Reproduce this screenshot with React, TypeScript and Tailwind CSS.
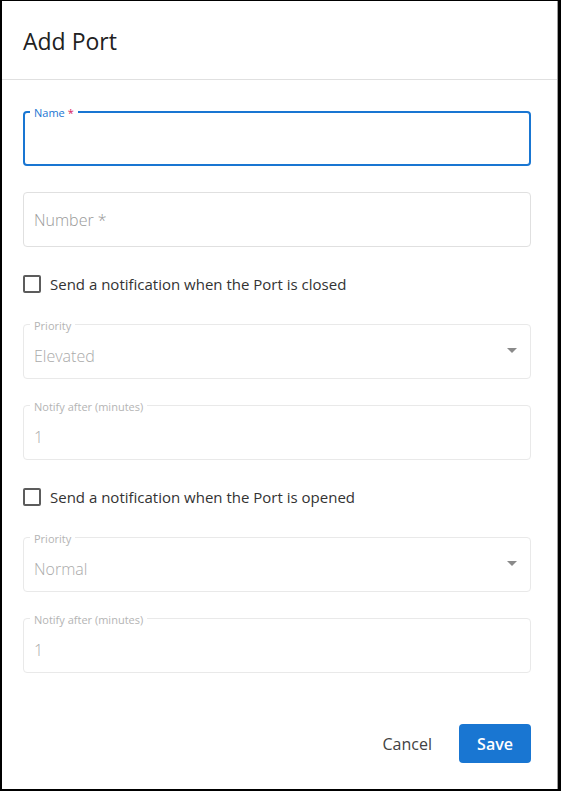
import React from "react";

type FieldProps = {
  label?: string;
  value?: string;
  select?: boolean;
};

// Champ désactivé avec libellé posé sur la bordure (style "outlined").
function DisabledField({ label, value, select }: FieldProps) {
  return (
    <div className="relative h-[55px] rounded-[4px] border border-[#e9e9e9]">
      <span className="absolute left-[6px] top-[-6px] bg-white px-[4px] text-[11px] leading-[14px] text-[#b4b4b4]">
        {label}
      </span>
      <div className="pl-[10px] pt-[19px] text-[16px] font-light leading-[24px] text-[#aaaaaa]">{value}</div>
      {select && (
        <svg
          className="absolute right-[13px] top-[23px]"
          width="10"
          height="5"
          viewBox="0 0 10 5"
          aria-hidden
        >
          <polygon points="0,0 10,0 5,5" fill="#8a8a8a" />
        </svg>
      )}
    </div>
  );
}

function CheckRow({ text }: { text: string }) {
  return (
    <label className="flex h-[18px] items-center gap-[9px]">
      <span className="h-[18px] w-[18px] rounded-[2px] border-2 border-[#5c5c5c] bg-white" />
      <span className="text-[15px] font-medium leading-[18px] text-[#333333]">{text}</span>
    </label>
  );
}

export default function App() {
  return (
    <div className="h-[791px] w-[561px] bg-black pb-[2px] pl-[2px] pr-[3px] pt-[1px]">
      <div className="flex h-[788px] flex-col border-r border-[#9e9e9e] bg-white font-['Open_Sans',sans-serif]">
        <header className="h-[79px] border-b border-[#e0e0e0] pl-[21px] pt-[24px]">
          <h1 className="text-[23px] leading-[32px] text-[#212121]">Add Port</h1>
        </header>

        <div className="ml-[21px] w-[508px]">
          {/* Name : champ actif */}
          <div className="relative mt-[31px] h-[55px] rounded-[4px] border-2 border-[#1976d2]">
            <span className="absolute left-[5px] top-[-7px] bg-white px-[4px] text-[11px] leading-[14px] text-[#1976d2]">
              Name <span className="text-[#d81b60]">*</span>
            </span>
          </div>

          <div className="mt-[26px] flex h-[55px] items-center rounded-[4px] border border-[#e0e0e0] pl-[10px] text-[16px] font-light leading-[24px] text-[#999999]">
            Number *
          </div>

          <div className="mt-[28px]">
            <CheckRow text="Send a notification when the Port is closed" />
          </div>

          <div className="mt-[31px]">
            <DisabledField label="Priority" value="Elevated" select />
          </div>
          <div className="mt-[26px]">
            <DisabledField label="Notify after (minutes)" value="1" />
          </div>

          <div className="mt-[28px]">
            <CheckRow text="Send a notification when the Port is opened" />
          </div>

          <div className="mt-[31px]">
            <DisabledField label="Priority" value="Normal" select />
          </div>
          <div className="mt-[26px]">
            <DisabledField label="Notify after (minutes)" value="1" />
          </div>

          <div className="mt-[51px] flex items-center justify-end">
            <button className="mr-[17px] h-[39px] px-[10px] text-[16px] text-[#424242]">Cancel</button>
            <button className="h-[39px] w-[72px] rounded-[4px] bg-[#1976d2] text-[16px] font-semibold text-white">
              Save
            </button>
          </div>
        </div>
      </div>
    </div>
  );
}
